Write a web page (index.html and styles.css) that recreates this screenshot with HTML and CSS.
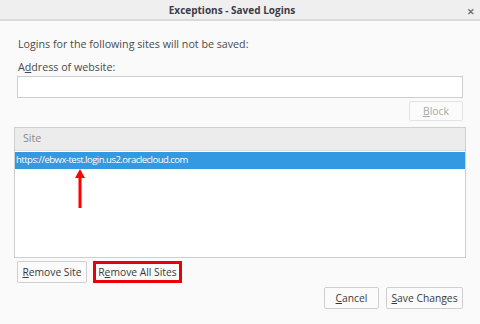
FILE: index.html
```html
<!DOCTYPE html>
<html>
<head>
<meta charset="utf-8">
<link rel="stylesheet" href="styles.css">
</head>
<body>
<div class="dialog">
  <div class="titlebar">
    <span class="title">Exceptions - Saved Logins</span>
    <span class="close">&#x2715;</span>
  </div>
  <div class="content">
    <div class="intro">Logins for the following sites will not be saved:</div>
    <div class="label">A<u>d</u>dress of website:</div>
    <div class="input"></div>
    <div class="block-row"><button class="btn btn-block"><u>B</u>lock</button></div>
    <div class="tree">
      <div class="tree-head">Site</div>
      <div class="tree-row selected">https://ebwx-test.login.us2.oraclecloud.com</div>
      <div class="arrow">
        <svg width="12" height="40" viewBox="0 0 12 40">
          <polygon points="6,0 11,9 1,9" fill="#f00"/>
          <rect x="4.5" y="8" width="3" height="31" fill="#f00"/>
        </svg>
      </div>
    </div>
    <div class="remove-row">
      <button class="btn btn-remove"><u>R</u>emove Site</button>
      <span class="highlight"><button class="btn btn-remove-all">R<u>e</u>move All Sites</button></span>
    </div>
    <div class="footer">
      <button class="btn btn-cancel"><u>C</u>ancel</button>
      <button class="btn btn-save"><u>S</u>ave Changes</button>
    </div>
  </div>
</div>
</body>
</html>
```
FILE: styles.css
```css
html, body {
  margin: 0;
  padding: 0;
}
body {
  width: 480px;
  height: 324px;
  background: #fafafa;
  font-family: "Open Sans", "Noto Sans", sans-serif;
  font-size: 10.7px;
  color: #4a4a4a;
  overflow: hidden;
}
.dialog {
  display: flex;
  flex-direction: column;
  height: 324px;
}
.titlebar {
  height: 19px;
  background: #efefef;
  border-bottom: 2px solid #dadada;
  display: flex;
  align-items: center;
  justify-content: center;
  position: relative;
}
.title {
  font-weight: bold;
  font-size: 10px;
  color: #3c3c46;
  margin-left: -16px;
}
.close {
  position: absolute;
  right: 5px;
  top: 5px;
  font-size: 9px;
  color: #6a6e78;
  font-weight: bold;
}
.content {
  display: flex;
  flex-direction: column;
  padding: 0 14px 0 14px;
}
.intro {
  margin-top: 15px;
  margin-left: 4px;
  line-height: 16px;
}
.label {
  margin-top: 7px;
  margin-left: 4px;
  line-height: 16px;
}
.input {
  margin: 1px 3px 0 3px;
  height: 20px;
  border: 1px solid #cdcdcd;
  background: #fff;
}
.block-row {
  display: flex;
  justify-content: flex-end;
  margin: 3px 3px 0 0;
}
.btn {
  font-family: inherit;
  font-size: 10.3px;
  color: #3a3a3a;
  background: #fbfbfb;
  border: 1px solid #cfcfcf;
  border-radius: 2px;
  height: 22px;
  padding: 0;
  margin: 0;
  white-space: nowrap;
}
.btn-block {
  width: 54px;
  height: 20px;
  color: #a8a8a8;
  border-color: #e3e3e3;
}
.tree {
  margin-top: 6px;
  height: 129px;
  border: 1px solid #cfcfcf;
  background: #fff;
  position: relative;
}
.tree-head {
  height: 22px;
  line-height: 20px;
  background: #ececec;
  border-bottom: 1px solid #dcdcdc;
  padding-left: 8px;
  color: #8a8a8a;
}
.tree-row {
  height: 17px;
  line-height: 16px;
  padding-left: 1px;
  margin-top: 1px;
}
.tree-row.selected {
  background: #3399e3;
  color: #fff;
  font-size: 9.5px;
  letter-spacing: -0.5px;
}
.arrow {
  position: absolute;
  left: 59px;
  top: 41px;
  line-height: 0;
}
.remove-row {
  display: flex;
  align-items: center;
  margin-top: 3px;
  margin-left: 3px;
}
.btn-remove {
  width: 70px;
}
.highlight {
  margin-left: 6px;
  border: 3px solid #e8000b;
  display: flex;
}
.btn-remove-all {
  width: 83px;
  height: 16px;
  border: none;
  background: #fbfbfb;
  line-height: 16px;
}
.footer {
  display: flex;
  justify-content: flex-end;
  gap: 7px;
  margin-top: 4px;
  margin-right: 3px;
}
.btn-cancel {
  width: 55px;
}
.btn-save {
  width: 77px;
}
```
